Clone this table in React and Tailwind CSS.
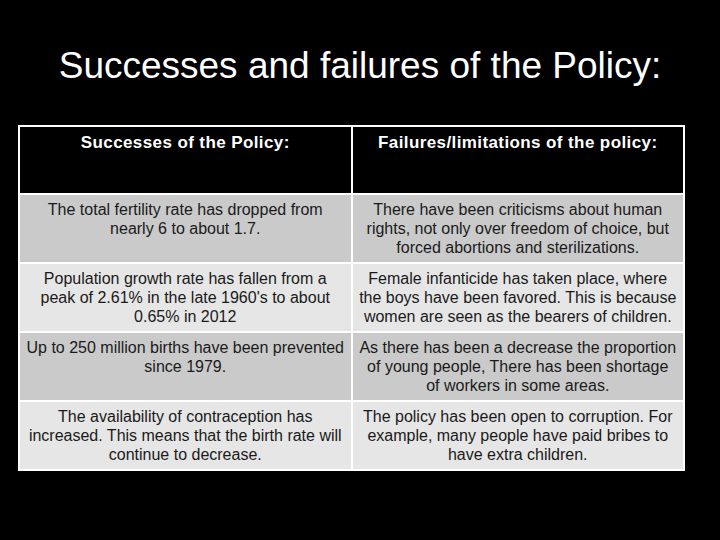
import React from "react";

const rows = [
  {
    bg: "bg-[#cacaca]",
    left: "The total fertility rate has dropped from nearly 6 to about 1.7.",
    right:
      "There have been criticisms about human rights, not only over freedom of choice, but forced abortions and sterilizations.",
  },
  {
    bg: "bg-[#e6e6e6]",
    left: "Population growth rate has fallen from a peak of 2.61% in the late 1960's to about 0.65% in 2012",
    right:
      "Female infanticide has taken place, where the boys have been favored. This is because women are seen as the bearers of children.",
  },
  {
    bg: "bg-[#cacaca]",
    left: "Up to 250 million births have been prevented since 1979.",
    right:
      "As there has been a decrease the proportion of young people, There has been shortage of\u00a0workers in some areas.",
  },
  {
    bg: "bg-[#e6e6e6]",
    left: "The availability of contraception has increased. This means that the birth rate will continue to decrease.",
    right:
      "The policy has been open to corruption. For example, many people have paid bribes to have extra children.",
  },
];

export default function App() {
  return (
    <div className="w-[720px] h-[540px] bg-black font-['Liberation_Sans',Arial,sans-serif] overflow-hidden">
      <h1 className="pt-[43px] h-[118px] text-center text-white text-[37px] leading-[46px]">
        Successes and failures of the Policy:
      </h1>
      <div className="ml-[18px] mt-[7px] w-[667px] border-2 border-white bg-white">
        <div className="grid grid-cols-2 gap-[2px]">
          <div className="bg-black h-[66px] pt-[6px] text-center text-white font-bold text-[17px] tracking-[0.4px] leading-[19px]">
            Successes of the Policy:
          </div>
          <div className="bg-black h-[66px] pt-[6px] text-center text-white font-bold text-[17px] tracking-[0.4px] leading-[19px]">
            Failures/limitations of the policy:
          </div>
          {rows.map((r, i) => (
            <React.Fragment key={i}>
              <div
                className={`${r.bg} h-[67px] px-[5px] pt-[5px] text-center text-[#1a1a1a] text-[16px] leading-[19px]`}
              >
                {r.left}
              </div>
              <div
                className={`${r.bg} h-[67px] px-[5px] pt-[5px] text-center text-[#1a1a1a] text-[16px] leading-[19px]`}
              >
                {r.right}
              </div>
            </React.Fragment>
          ))}
        </div>
      </div>
    </div>
  );
}
